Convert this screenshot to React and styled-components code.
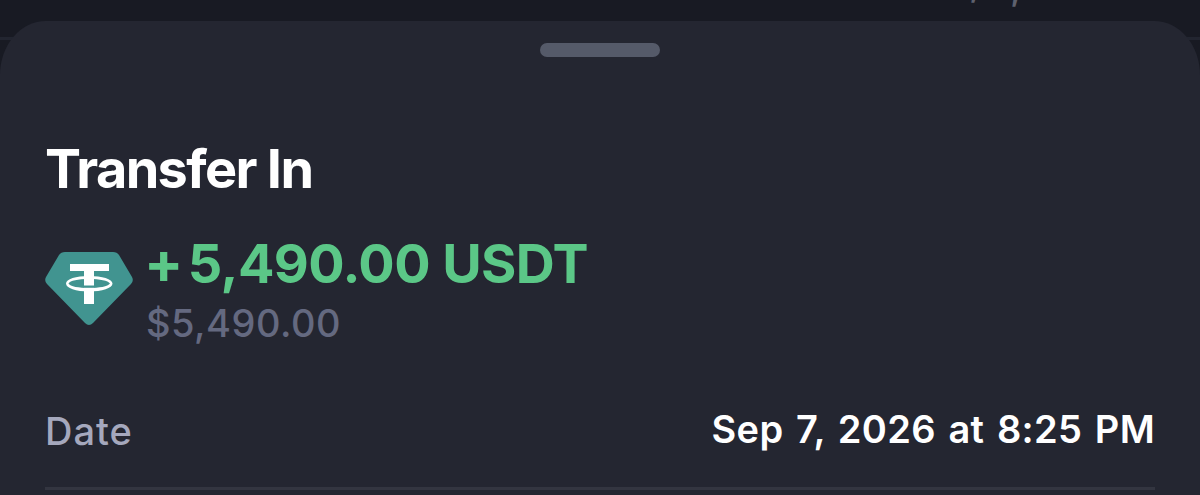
import React from "react";
import styled, { createGlobalStyle } from "styled-components";

const GlobalStyle = createGlobalStyle`
  * {
    box-sizing: border-box;
  }

  body {
    margin: 0;
    background-color: #181a23;
    font-family: "Inter", sans-serif;
    overflow: hidden;
  }
`;

const Screen = styled.div`
  position: relative;
  height: 495px;
  padding-top: 21px;
  background-color: #181a23;
  overflow: hidden;
`;

const BackdropLine = styled.div`
  position: absolute;
  top: 37px;
  left: 0;
  right: 0;
  height: 3px;
  background-color: #222530;
`;

const BackdropText = styled.span`
  position: absolute;
  top: ${(props) => props.$top}px;
  left: ${(props) => props.$left}px;
  color: #5e616e;
  font-size: 38px;
  font-weight: 500;
  line-height: 46px;
`;

const Sheet = styled.main`
  position: relative;
  height: 474px;
  padding: 22px 45px 0;
  border-radius: 46px 46px 0 0 / 54px 54px 0 0;
  background-color: #242631;
`;

const Handle = styled.div`
  width: 120px;
  height: 14px;
  margin: 0 auto;
  border-radius: 7px;
  background-color: #555a69;
`;

const Title = styled.h1`
  margin: 79px 0 0;
  color: #ffffff;
  font-size: 54px;
  font-weight: 700;
  line-height: 66px;
  letter-spacing: -1.65px;
  white-space: nowrap;
`;

const Transfer = styled.section`
  display: flex;
  margin-top: 29px;
`;

const TokenIcon = styled.svg`
  display: block;
  flex: none;
  width: 88px;
  height: 74px;
  margin: 21px 13px 0 0;
`;

const Amount = styled.div`
  height: 66px;
  margin-left: -2px;
  color: #5bc787;
  font-size: 54px;
  font-weight: 700;
  line-height: 66px;
  letter-spacing: -0.6px;
  white-space: nowrap;
`;

const Sign = styled.span`
  margin-right: 5px;
  font-size: 58px;
  line-height: 1;
`;

const FiatValue = styled.div`
  margin-top: 3px;
  color: #646980;
  font-size: 38px;
  font-weight: 500;
  line-height: 46px;
  letter-spacing: 0.5px;
`;

const Row = styled.div`
  display: flex;
  justify-content: space-between;
  height: 84px;
  margin-top: 60px;
  border-bottom: 3px solid #333540;
`;

const Label = styled.span`
  padding-top: 2px;
  color: #a5a8bd;
  font-size: 38px;
  font-weight: 500;
  line-height: 46px;
  letter-spacing: 1px;
`;

const Value = styled.span`
  color: #ffffff;
  font-size: 38px;
  font-weight: 600;
  line-height: 46px;
  letter-spacing: 0.3px;
  word-spacing: 2.8px;
`;

const Tether = () => (
  <TokenIcon viewBox="0 0 88 74">
    <path
      fill="#419490"
      d="M20 0H68Q72 0 74 3L87 25Q89 29 86 32L48 71Q44 75 40 71L2 32Q-1 29 1 25L14 3Q16 0 20 0Z"
    />
    <path fill="#ffffff" d="M25 12H64V19H49V52H39V19H25Z" />
    <path
      fill="#ffffff"
      fillRule="evenodd"
      d="M21 31.5C21 27 31 24 44 24S67.500 27 67.500 31.500S57 39.500 44 39.500S21 36 21 31.500ZM23.500 31.500C25 34.500 34 36 44 36S63 34.500 65 31.500C63 28.500 55 27 44 27S25 28.500 23.500 31.500Z"
    />
    <path fill="#419490" d="M39 33.500H49V35.800H39Z" />
  </TokenIcon>
);

const App = () => {
  return (
    <>
      <GlobalStyle />
      <Screen>
        <BackdropLine />
        <BackdropText $left={969} $top={-41}>
          ,
        </BackdropText>
        <BackdropText $left={1010} $top={-37}>
          ,
        </BackdropText>
        <Sheet>
          <Handle />
          <Title>Transfer In</Title>
          <Transfer>
            <Tether />
            <div>
              <Amount>
                <Sign>+</Sign>5,490.00 USDT
              </Amount>
              <FiatValue>$5,490.00</FiatValue>
            </div>
          </Transfer>
          <Row>
            <Label>Date</Label>
            <Value>Sep 7, 2026 at 8:25 PM</Value>
          </Row>
        </Sheet>
      </Screen>
    </>
  );
};

export default App;
